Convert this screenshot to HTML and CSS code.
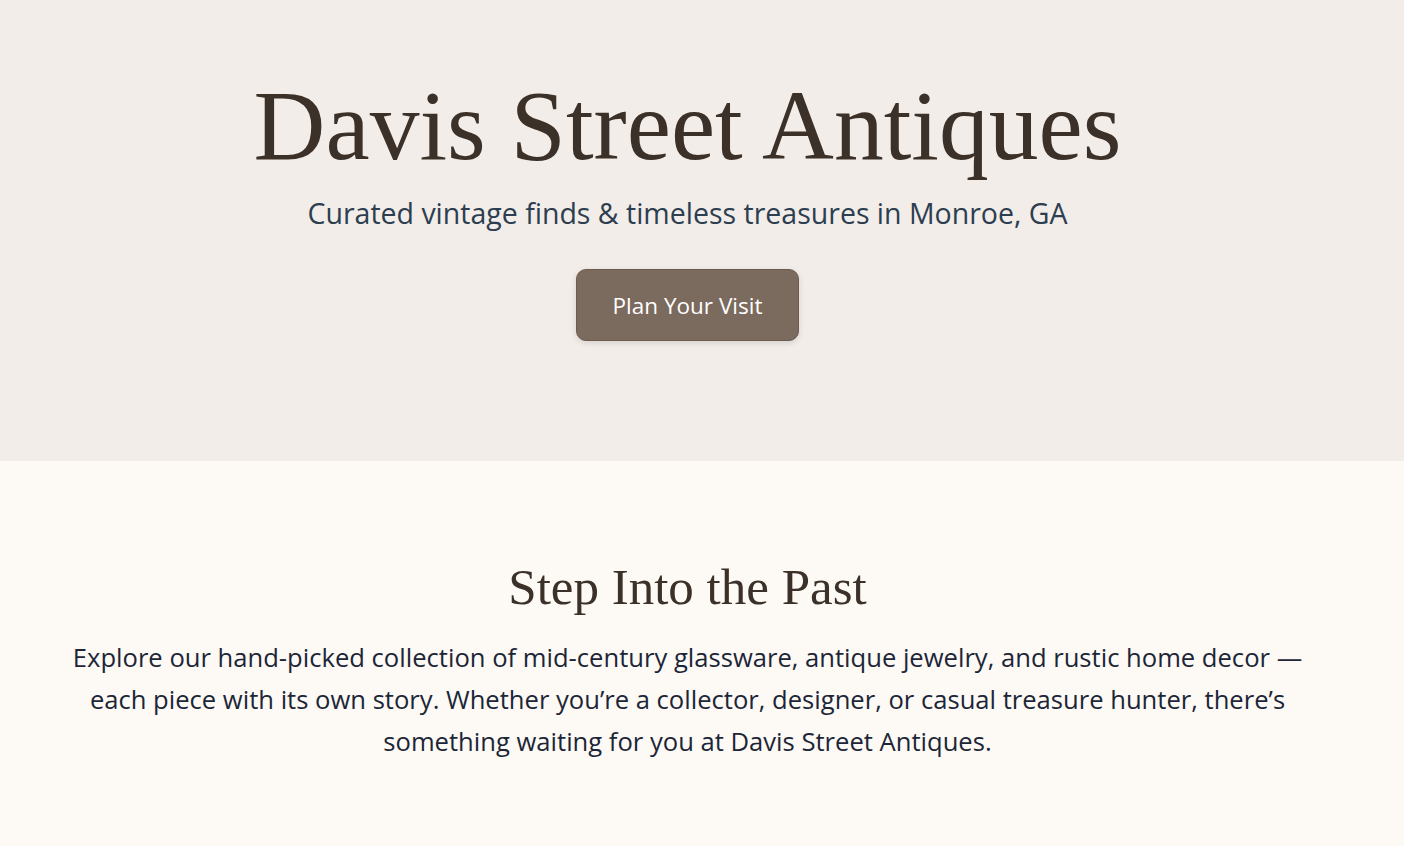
FILE: index.html
```html
<!DOCTYPE html>
<html lang="en">
<head>
<meta charset="utf-8">
<title>Davis Street Antiques</title>
<link rel="stylesheet" href="styles.css">
</head>
<body>
<header class="hero">
  <h1 class="hero-title">Davis Street Antiques</h1>
  <p class="hero-sub">Curated vintage finds &amp; timeless treasures in Monroe, GA</p>
  <a class="btn" href="#visit">Plan Your Visit</a>
</header>
<section class="intro">
  <h2 class="intro-title">Step Into the Past</h2>
  <p class="intro-text">Explore our hand-picked collection of mid-century glassware, antique jewelry, and rustic home decor — each piece with its own story. Whether you’re a collector, designer, or casual treasure hunter, there’s something waiting for you at Davis Street Antiques.</p>
</section>
</body>
</html>
```
FILE: styles.css
```css
* { box-sizing: border-box; }
html, body { margin: 0; padding: 0; }
body {
  background: #fdfaf6;
  font-family: "Open Sans", "Noto Sans", sans-serif;
  color: #1e2b3b;
}
.hero {
  background: #f2ede9;
  height: 461px;
  display: flex;
  flex-direction: column;
  align-items: center;
  padding: 71px 29px 0 0;
}
.hero-title {
  margin: 0;
  font-family: "Liberation Serif", "DejaVu Serif", serif;
  font-weight: 400;
  font-size: 99.5px;
  line-height: 110px;
  color: #3c3129;
}
.hero-sub {
  margin: 12px 0 0;
  font-size: 28.5px;
  line-height: 40px;
  color: #2c3e50;
}
.btn {
  margin-top: 36px;
  display: inline-flex;
  align-items: center;
  justify-content: center;
  width: 223px;
  height: 72px;
  background: #7b6a5e;
  border-radius: 10px;
  color: #ffffff;
  text-decoration: none;
  font-size: 22.5px;
  box-shadow: 0 2px 6px rgba(0,0,0,0.12);
  border: 1px solid #6e5c50;
}
.intro {
  padding: 96px 69px 80px 40px;
  text-align: center;
}
.intro-title {
  margin: 0;
  font-family: "Liberation Serif", "DejaVu Serif", serif;
  font-weight: 400;
  font-size: 51px;
  line-height: 60px;
  color: #3c3129;
}
.intro-text {
  margin: 20px auto 0;
  max-width: 1264px;
  font-size: 25.6px;
  line-height: 42px;
  color: #1c2636;
}
```
